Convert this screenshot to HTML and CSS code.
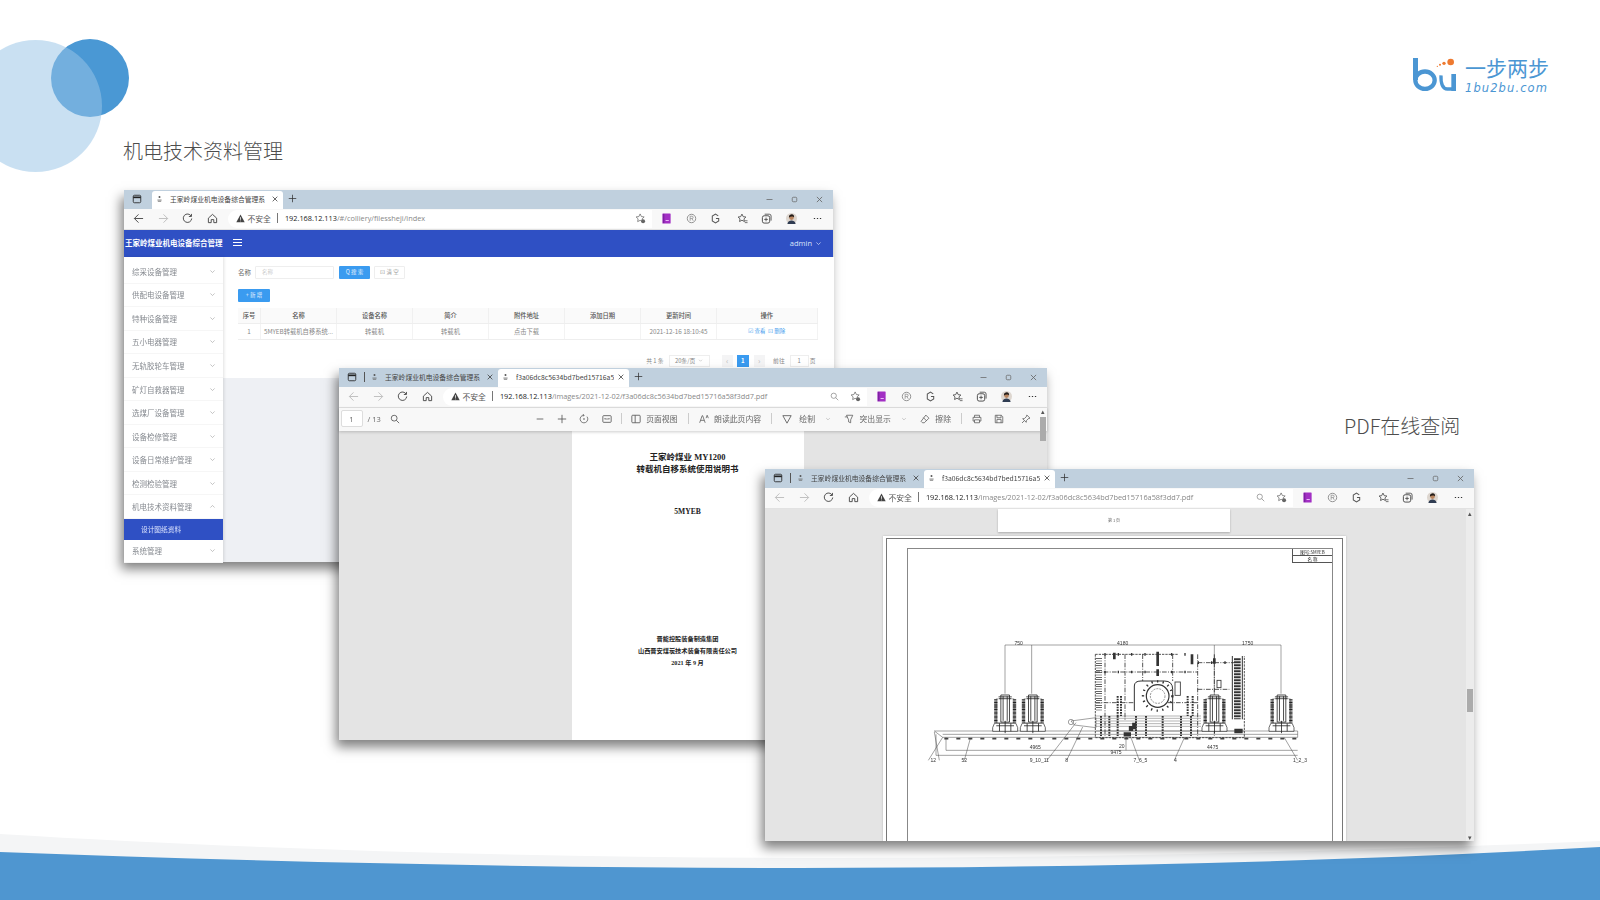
FILE: index.html
```html
<!DOCTYPE html>
<html lang="zh-CN">
<head>
    <meta charset="UTF-8">
    <meta name="viewport" content="width=device-width, initial-scale=1.0">
    <title>机电技术资料管理</title>
    <link rel="stylesheet" href="styles.css">
</head>
<body>
<svg class="sprites" width="0" height="0">
    <symbol id="i-panes" viewBox="0 0 12 12"><rect x="1.5" y="1.5" width="9" height="9" rx="1.5" fill="none" stroke="currentColor"/><path d="M1.5 4h9" stroke="currentColor" stroke-width="2"/></symbol>
    <symbol id="i-fav" viewBox="0 0 10 10"><circle cx="5" cy="2.8" r="1.4" fill="#555"/><path d="M2 7.2h6M2.6 9h4.8" stroke="#666" stroke-width="1.1"/></symbol>
    <symbol id="i-back" viewBox="0 0 12 12"><path d="M11 6H1.5M6 1.5 1.5 6 6 10.5" fill="none" stroke="currentColor"/></symbol>
    <symbol id="i-forward" viewBox="0 0 12 12"><path d="M1 6h9.5M6 1.5 10.5 6 6 10.5" fill="none" stroke="currentColor"/></symbol>
    <symbol id="i-refresh" viewBox="0 0 12 12"><path d="M10 3.4A4.6 4.6 0 1 0 10.6 6M10.3 1v2.8H7.5" fill="none" stroke="currentColor"/></symbol>
    <symbol id="i-home" viewBox="0 0 12 12"><path d="M1.5 5.6 6 1.5l4.5 4.1v4.9H7.4V7.2H4.6v3.3H1.5z" fill="none" stroke="currentColor"/></symbol>
    <symbol id="i-warn" viewBox="0 0 12 12"><path d="M6 .8 11.6 11H.4z" fill="#444"/><path d="M6 4.2v3.6M6 8.8v1" stroke="#fff"/></symbol>
    <symbol id="i-star-gear" viewBox="0 0 12 12"><path d="M5.6 1 7 3.9l3 .4-2.2 2.1.5 3-2.7-1.4L2.9 9.4l.5-3L1.2 4.3l3-.4z" fill="none" stroke="#666" stroke-width=".8"/><circle cx="8.8" cy="9" r="2.2" fill="#666"/></symbol>
    <symbol id="i-book" viewBox="0 0 12 12"><rect x="1.5" y=".5" width="9" height="11" rx=".6" fill="#a22fc4"/><path d="M3 1v10" stroke="#6b1d91"/><path d="M5 8.2h3.5" stroke="#f1c8ff"/></symbol>
    <symbol id="i-badge" viewBox="0 0 12 12"><circle cx="6" cy="6" r="4.6" fill="none" stroke="#8a8a8a"/><path d="M4.5 8.5v-5h2a1.3 1.3 0 0 1 0 2.6h-2M6.5 6l1.4 2.5" fill="none" stroke="#8a8a8a" stroke-width=".8"/></symbol>
    <symbol id="i-hex" viewBox="0 0 12 12"><path d="M9 3.2 6 1.3 2.5 3.4v5.2L6 10.7l3.5-2.1V6H6.5" fill="none" stroke="#555" stroke-width="1.1"/></symbol>
    <symbol id="i-star-list" viewBox="0 0 12 12"><path d="M5.4 1.2 6.8 4l2.9.4-2.1 2 .5 2.9-2.7-1.4-2.6 1.4.5-2.9-2.1-2L4 4z" fill="none" stroke="#444" stroke-width=".9"/><path d="M8.5 8.5h3M8.5 10.5h3" stroke="#444" stroke-width=".8"/></symbol>
    <symbol id="i-collect" viewBox="0 0 12 12"><rect x="1.5" y="3" width="8" height="8" rx="2" fill="none" stroke="#444"/><path d="M4 1.3h5a2 2 0 0 1 2 2v5M5.5 5v4M3.5 7h4" fill="none" stroke="#444" stroke-width=".9"/></symbol>
    <symbol id="i-avatar" viewBox="0 0 12 12"><circle cx="6" cy="6" r="6" fill="#ddd6cf"/><path d="M1.5 12c.5-3 2.5-3.8 4.5-3.8s4 .8 4.500 3.800z" fill="#2f3c52"/><circle cx="6" cy="5" r="2.6" fill="#b9855f"/><path d="M3.2 4.8C3 2 5 1.3 6.3 1.3c2 0 2.8 1.500 2.500 3.400C8 3.500 5 3.500 3.200 4.800z" fill="#231c19"/></symbol>
    <symbol id="i-dots" viewBox="0 0 12 12"><path d="M2 6h1.400M5.300 6h1.400M8.600 6H10" stroke="#333" stroke-width="1.200"/></symbol>
    <symbol id="i-close" viewBox="0 0 12 12"><path d="m2.500 2.500 7 7m0-7-7 7" stroke="currentColor" stroke-width="1.100"/></symbol>
    <symbol id="i-plus" viewBox="0 0 12 12"><path d="M6 1v10M1 6h10" stroke="currentColor"/></symbol>
    <symbol id="i-min" viewBox="0 0 12 12"><path d="M2 6h8" stroke="currentColor"/></symbol>
    <symbol id="i-max" viewBox="0 0 12 12"><rect x="3" y="3" width="6" height="6" rx="1.500" fill="none" stroke="currentColor"/></symbol>
    <symbol id="i-search" viewBox="0 0 12 12"><circle cx="5" cy="5" r="3.500" fill="none" stroke="currentColor"/><path d="m7.500 7.500 3.500 3.500" stroke="currentColor"/></symbol>
    <symbol id="i-rotate" viewBox="0 0 12 12"><path d="M9.600 3.200A4.600 4.600 0 1 1 6 1.400M4.500 .3 6.200 1.500 4.800 3" fill="none" stroke="currentColor" stroke-width=".9"/><circle cx="6" cy="6" r="1" fill="currentColor"/></symbol>
    <symbol id="i-fit" viewBox="0 0 12 12"><rect x="1" y="2" width="10" height="8" rx="1" fill="none" stroke="currentColor"/><path d="M3 6h6M3 6l1.200-1.200M9 6 7.800 4.800" stroke="currentColor" stroke-width=".8" fill="none"/></symbol>
    <symbol id="i-pageview" viewBox="0 0 12 12"><rect x="1" y="1.500" width="10" height="9" rx="1" fill="none" stroke="currentColor"/><path d="M5 1.500v9" stroke="currentColor"/></symbol>
    <symbol id="i-read" viewBox="0 0 12 12"><path d="m.8 10.500 3-8.500h.6l3 8.500M2 7.600h4.200M8.500 5l1.300-3.500L11.200 5" fill="none" stroke="currentColor" stroke-width=".9"/></symbol>
    <symbol id="i-draw" viewBox="0 0 12 12"><path d="M1 2h10L6 11z" fill="none" stroke="currentColor"/></symbol>
    <symbol id="i-mark" viewBox="0 0 12 12"><path d="M3 1.500h7.500L8 7v3.500l-2.500-1V7zM1 3.500h3" fill="none" stroke="currentColor" stroke-width=".9"/></symbol>
    <symbol id="i-erase" viewBox="0 0 12 12"><path d="m7 1.300 3.700 3.700-5.500 5.500H3L1.300 8.800zM4 4.300 8 8.300" fill="none" stroke="currentColor" stroke-width=".9"/></symbol>
    <symbol id="i-print" viewBox="0 0 12 12"><path d="M3 4V1.500h6V4M3 8.500H1.300V4h9.400v4.500H9M3 7h6v3.500H3z" fill="none" stroke="currentColor" stroke-width=".9"/></symbol>
    <symbol id="i-save" viewBox="0 0 12 12"><path d="M1.500 1.500h7.300l1.700 1.700v7.300h-9zM3.500 1.500v3h5v-3M3.500 10.500v-4h5v4" fill="none" stroke="currentColor" stroke-width=".9"/></symbol>
    <symbol id="i-pin" viewBox="0 0 12 12"><path d="M7 1.200 10.800 5 8.600 5.700 6.500 8l-.2 2L2 5.700l2-.2 2.300-2.100zM3.800 8.200 1.200 10.800" fill="none" stroke="currentColor" stroke-width=".9"/></symbol>
    <symbol id="i-chev" viewBox="0 0 10 10"><path d="m2 3.500 3 3 3-3" fill="none" stroke="currentColor"/></symbol>
    <symbol id="i-jack" viewBox="0 0 110 130" preserveAspectRatio="none" overflow="visible">
        <path d="M16 12h78v78H16z" fill="none" stroke="#555" stroke-width="1.500"/>
        <path d="M14 14v76M96 14v76" stroke="#222" stroke-width="15" stroke-dasharray="3 1.500"/>
        <path d="M36 0h38v88H36z" fill="#fff" stroke="#222" stroke-width="3"/>
        <path d="M26 6h58M28 12h54M46 4v80M64 4v80" stroke="#222" stroke-width="3"/>
        <path d="M8 92h94l8 14v12H0v-12z" fill="#fff" stroke="#222" stroke-width="2.500"/>
        <path d="M16 100h78M30 92v26M55 84v40M80 92v26" stroke="#222" stroke-width="3"/>
    </symbol>
</svg>

<div class="slide">
    <div class="circle circle-small"></div>
    <div class="circle circle-big"></div>

    <svg class="wave" viewBox="0 0 1600 70" preserveAspectRatio="none">
        <path d="M0 4C260 20 560 28 830 28 1100 28 1380 20 1600 11V40H0z" fill="#f4f5f6"/>
        <path d="M0 22C260 32 540 38 800 38 1060 38 1340 32 1600 17V70H0z" fill="#4f96d0"/>
    </svg>

    <h1 class="slide-title">机电技术资料管理</h1>
    <h2 class="side-title">PDF在线查阅</h2>

    <div class="logo">
        <svg class="logo-mark" viewBox="0 0 168 132">
            <rect x="15" y="18" width="15" height="66" fill="#4b96d3"/>
            <ellipse cx="51" cy="84.500" rx="29" ry="26" fill="none" stroke="#4b96d3" stroke-width="13"/>
            <path d="M99 70C98 95 104 111 118 111H134" fill="none" stroke="#4b96d3" stroke-width="10"/>
            <path d="M137 66V117" stroke="#4b96d3" stroke-width="14"/>
            <circle cx="128" cy="30" r="10" fill="#ee7a30"/>
            <circle cx="108" cy="34" r="5" fill="#ee7a30"/>
            <circle cx="96" cy="38" r="3" fill="#ee7a30"/>
            <circle cx="88" cy="43" r="2" fill="#ee7a30"/>
        </svg>
        <div class="logo-text">
            <div class="logo-cn">一步两步</div>
            <div class="logo-en">1bu2bu.com</div>
        </div>
    </div>

    <!-- admin page -->
    <div class="win win-admin">
        <div class="tabs">
            <span class="tab-panes"><svg class="ic"><use href="#i-panes"/></svg></span>
            <div class="tab tab-on"><svg class="fav"><use href="#i-fav"/></svg><span class="tab-name">王家岭煤业机电设备综合管理系</span><svg class="tab-x"><use href="#i-close"/></svg></div>
            <svg class="tab-plus"><use href="#i-plus"/></svg>
            <div class="win-btns"><svg class="ic"><use href="#i-min"/></svg><svg class="ic"><use href="#i-max"/></svg><svg class="ic"><use href="#i-close"/></svg></div>
        </div>
        <div class="toolbar">
            <span class="tb"><svg class="ic"><use href="#i-back"/></svg></span>
            <span class="tb dim"><svg class="ic"><use href="#i-forward"/></svg></span>
            <span class="tb"><svg class="ic"><use href="#i-refresh"/></svg></span>
            <span class="tb"><svg class="ic"><use href="#i-home"/></svg></span>
            <div class="address">
                <svg class="warn"><use href="#i-warn"/></svg><span class="unsafe">不安全</span><span class="addr-sep"></span>
                <span class="url"><b>192.168.12.113</b>/#/colliery/filessheji/index</span>
                <svg class="ic addr-end"><use href="#i-star-gear"/></svg>
            </div>
            <div class="tb-right">
                <span class="tb"><svg class="ic"><use href="#i-book"/></svg></span>
                <span class="tb"><svg class="ic"><use href="#i-badge"/></svg></span>
                <span class="tb"><svg class="ic"><use href="#i-hex"/></svg></span>
                <span class="tb"><svg class="ic"><use href="#i-star-list"/></svg></span>
                <span class="tb"><svg class="ic"><use href="#i-collect"/></svg></span>
                <span class="tb"><svg class="ic"><use href="#i-avatar"/></svg></span>
                <span class="tb"><svg class="ic"><use href="#i-dots"/></svg></span>
            </div>
        </div>
        <div class="app-head">
            <div class="app-name">王家岭煤业机电设备综合管理</div>
            <div class="burger"><i></i><i></i><i></i></div>
            <div class="app-user">admin <svg class="chev"><use href="#i-chev"/></svg></div>
        </div>
        <div class="app-body">
            <div class="menu">
                <div class="menu-row">综采设备管理<svg class="chev"><use href="#i-chev"/></svg></div>
                <div class="menu-row">供配电设备管理<svg class="chev"><use href="#i-chev"/></svg></div>
                <div class="menu-row">特种设备管理<svg class="chev"><use href="#i-chev"/></svg></div>
                <div class="menu-row">五小电器管理<svg class="chev"><use href="#i-chev"/></svg></div>
                <div class="menu-row">无轨胶轮车管理<svg class="chev"><use href="#i-chev"/></svg></div>
                <div class="menu-row">矿灯自救器管理<svg class="chev"><use href="#i-chev"/></svg></div>
                <div class="menu-row">选煤厂设备管理<svg class="chev"><use href="#i-chev"/></svg></div>
                <div class="menu-row">设备检修管理<svg class="chev"><use href="#i-chev"/></svg></div>
                <div class="menu-row">设备日常维护管理<svg class="chev"><use href="#i-chev"/></svg></div>
                <div class="menu-row">检测检验管理<svg class="chev"><use href="#i-chev"/></svg></div>
                <div class="menu-row">机电技术资料管理<svg class="chev chev-up"><use href="#i-chev"/></svg></div>
                <div class="menu-sub">设计图纸资料</div>
                <div class="menu-row">系统管理<svg class="chev"><use href="#i-chev"/></svg></div>
            </div>
            <div class="content">
                <div class="card">
                    <div class="filter">
                        <span class="filter-label">名称</span>
                        <span class="filter-input">名称</span>
                        <span class="btn btn-blue btn-search">Q 搜 索</span>
                        <span class="btn btn-plain">⊡ 清 空</span>
                    </div>
                    <span class="btn btn-blue btn-add">+ 新 增</span>
                    <table class="grid">
                        <colgroup><col class="c-no"><col class="c-n"><col class="c-n"><col class="c-n"><col class="c-n"><col class="c-n"><col class="c-n"><col class="c-op"></colgroup>
                        <tr><th>序号</th><th>名称</th><th>设备名称</th><th>简介</th><th>附件地址</th><th>添加日期</th><th>更新时间</th><th>操作</th></tr>
                        <tr><td>1</td><td>5MYEB转载机自移系统...</td><td>转载机</td><td>转载机</td><td>点击下载</td><td></td><td>2021-12-16 18:10:45</td><td class="ops">☑ 查看 &nbsp;⊡ 删除</td></tr>
                    </table>
                    <div class="pager">
                        <span>共 1 条</span>
                        <span class="pg-size">20条/页 <svg class="chev"><use href="#i-chev"/></svg></span>
                        <span class="pg-arrow pg-prev">‹</span>
                        <span class="pg-num">1</span>
                        <span class="pg-arrow pg-next">›</span>
                        <span class="pg-go">前往</span>
                        <span class="pg-input">1</span>
                        <span>页</span>
                    </div>
                </div>
            </div>
        </div>
    </div>

    <!-- pdf cover -->
    <div class="win win-cover">
        <div class="tabs">
            <span class="tab-panes tab-panes-line"><svg class="ic"><use href="#i-panes"/></svg></span>
            <div class="tab"><svg class="fav"><use href="#i-fav"/></svg><span class="tab-name">王家岭煤业机电设备综合管理系</span><svg class="tab-x"><use href="#i-close"/></svg></div>
            <div class="tab tab-on"><svg class="fav"><use href="#i-fav"/></svg><span class="tab-name">f3a06dc8c5634bd7bed15716a5</span><svg class="tab-x"><use href="#i-close"/></svg></div>
            <svg class="tab-plus"><use href="#i-plus"/></svg>
            <div class="win-btns"><svg class="ic"><use href="#i-min"/></svg><svg class="ic"><use href="#i-max"/></svg><svg class="ic"><use href="#i-close"/></svg></div>
        </div>
        <div class="toolbar">
            <span class="tb dim"><svg class="ic"><use href="#i-back"/></svg></span>
            <span class="tb dim"><svg class="ic"><use href="#i-forward"/></svg></span>
            <span class="tb"><svg class="ic"><use href="#i-refresh"/></svg></span>
            <span class="tb"><svg class="ic"><use href="#i-home"/></svg></span>
            <div class="address">
                <svg class="warn"><use href="#i-warn"/></svg><span class="unsafe">不安全</span><span class="addr-sep"></span>
                <span class="url"><b>192.168.12.113</b>/images/2021-12-02/f3a06dc8c5634bd7bed15716a58f3dd7.pdf</span>
                <svg class="ic addr-zoom"><use href="#i-search"/></svg>
                <svg class="ic addr-end"><use href="#i-star-gear"/></svg>
            </div>
            <div class="tb-right">
                <span class="tb"><svg class="ic"><use href="#i-book"/></svg></span>
                <span class="tb"><svg class="ic"><use href="#i-badge"/></svg></span>
                <span class="tb"><svg class="ic"><use href="#i-hex"/></svg></span>
                <span class="tb"><svg class="ic"><use href="#i-star-list"/></svg></span>
                <span class="tb"><svg class="ic"><use href="#i-collect"/></svg></span>
                <span class="tb"><svg class="ic"><use href="#i-avatar"/></svg></span>
                <span class="tb"><svg class="ic"><use href="#i-dots"/></svg></span>
            </div>
        </div>
        <div class="pdfbar">
            <span class="pdf-page">1</span>
            <span class="pdf-total">/ 13</span>
            <svg class="ic pdf-find"><use href="#i-search"/></svg>
            <svg class="ic pdf-minus"><use href="#i-min"/></svg>
            <svg class="ic pdf-tool"><use href="#i-plus"/></svg>
            <svg class="ic pdf-tool"><use href="#i-rotate"/></svg>
            <svg class="ic pdf-tool"><use href="#i-fit"/></svg>
            <span class="pdf-sep pdf-sep-first"></span>
            <svg class="ic"><use href="#i-pageview"/></svg><span class="pdf-lab">页面视图</span>
            <span class="pdf-sep"></span>
            <svg class="ic"><use href="#i-read"/></svg><span class="pdf-lab">朗读此页内容</span>
            <span class="pdf-sep"></span>
            <svg class="ic"><use href="#i-draw"/></svg><span class="pdf-lab pdf-lab-wide">绘制</span><svg class="chev"><use href="#i-chev"/></svg>
            <svg class="ic pdf-gap"><use href="#i-mark"/></svg><span class="pdf-lab">突出显示</span><svg class="chev"><use href="#i-chev"/></svg>
            <svg class="ic pdf-gap"><use href="#i-erase"/></svg><span class="pdf-lab">擦除</span>
            <span class="pdf-sep"></span>
            <svg class="ic"><use href="#i-print"/></svg>
            <svg class="ic pdf-tool"><use href="#i-save"/></svg>
            <svg class="ic pdf-pin"><use href="#i-pin"/></svg>
        </div>
        <div class="pdf-view pdf-view-cover">
            <div class="cover">
                <p class="cover-title">王家岭煤业 MY1200</p>
                <p class="cover-title">转载机自移系统使用说明书</p>
                <p class="cover-model">5MYEB</p>
                <p class="cover-org">晋能控股装备制造集团</p>
                <p class="cover-org">山西晋安煤炭技术装备有限责任公司</p>
                <p class="cover-org">2021 年 9 月</p>
            </div>
        </div>
        <div class="scroll scroll-over"><span class="scroll-top">▴</span><span class="thumb thumb-cover"></span></div>
    </div>

    <!-- pdf drawing -->
    <div class="win win-drawing">
        <div class="tabs">
            <span class="tab-panes tab-panes-line"><svg class="ic"><use href="#i-panes"/></svg></span>
            <div class="tab"><svg class="fav"><use href="#i-fav"/></svg><span class="tab-name">王家岭煤业机电设备综合管理系</span><svg class="tab-x"><use href="#i-close"/></svg></div>
            <div class="tab tab-on"><svg class="fav"><use href="#i-fav"/></svg><span class="tab-name">f3a06dc8c5634bd7bed15716a5</span><svg class="tab-x"><use href="#i-close"/></svg></div>
            <svg class="tab-plus"><use href="#i-plus"/></svg>
            <div class="win-btns"><svg class="ic"><use href="#i-min"/></svg><svg class="ic"><use href="#i-max"/></svg><svg class="ic"><use href="#i-close"/></svg></div>
        </div>
        <div class="toolbar">
            <span class="tb dim"><svg class="ic"><use href="#i-back"/></svg></span>
            <span class="tb dim"><svg class="ic"><use href="#i-forward"/></svg></span>
            <span class="tb"><svg class="ic"><use href="#i-refresh"/></svg></span>
            <span class="tb"><svg class="ic"><use href="#i-home"/></svg></span>
            <div class="address">
                <svg class="warn"><use href="#i-warn"/></svg><span class="unsafe">不安全</span><span class="addr-sep"></span>
                <span class="url"><b>192.168.12.113</b>/images/2021-12-02/f3a06dc8c5634bd7bed15716a58f3dd7.pdf</span>
                <svg class="ic addr-zoom"><use href="#i-search"/></svg>
                <svg class="ic addr-end"><use href="#i-star-gear"/></svg>
            </div>
            <div class="tb-right">
                <span class="tb"><svg class="ic"><use href="#i-book"/></svg></span>
                <span class="tb"><svg class="ic"><use href="#i-badge"/></svg></span>
                <span class="tb"><svg class="ic"><use href="#i-hex"/></svg></span>
                <span class="tb"><svg class="ic"><use href="#i-star-list"/></svg></span>
                <span class="tb"><svg class="ic"><use href="#i-collect"/></svg></span>
                <span class="tb"><svg class="ic"><use href="#i-avatar"/></svg></span>
                <span class="tb"><svg class="ic"><use href="#i-dots"/></svg></span>
            </div>
        </div>
        <div class="pdf-view pdf-view-drawing">
            <div class="pages">
                <div class="page-end">第 1 页</div>
                <div class="sheet">
                    <div class="sheet-frame">
                        <div class="sheet-inner">
                            <div class="title-block"><span>图号:5MYEB</span><span>名 称</span></div>
                            <svg class="plan" viewBox="0 0 1320 480">
                                <g fill="none" stroke="#444" stroke-width="1.500">
                                    <path d="M312 218V72H1140V218M392 72V218M940 72V218"/>
                                    <path d="M100 330 125 349H1190V330H100M125 340H1190"/>
                                    <path d="M135 349V388H1190M105 340V403H1190M675 352V388"/>
                                    <path d="M100 333 115 418M125 349 82 418M208 352 190 418M525 305 438 418M545 318 497 418M690 350 715 418M850 350 820 418M1150 350 1190 418"/>
                                    <path d="M510 300 585 290V320L520 312z"/>
                                    <circle cx="510" cy="303" r="8"/>
                                    <path d="M130 353H1190" stroke-width="5" stroke-dasharray="12 24"/>
                                    <path d="M585 285H900M585 292H900M585 300H900M585 308H900M585 316H900M585 330H1030" stroke-width="1.200"/>
                                </g>
                                <g fill="none" stroke="#333" stroke-width="2.500">
                                    <path d="M583 100V350H1030V105M583 100H830" stroke-dasharray="7 3"/>
                                    <path d="M612 100V345M672 100V300M725 100V180M815 100V180M890 100V345M940 100V345" stroke-dasharray="14 4 3 4"/>
                                    <path d="M583 153H890M583 245H700M800 245H890M890 125H1000M890 205H985" stroke-dasharray="14 4 3 4"/>
                                    <path d="M700 270V195Q700 180 720 180H790Q815 180 815 205V270" stroke-width="3"/>
                                    <circle cx="770" cy="225" r="34" stroke-width="3.500"/>
                                    <circle cx="770" cy="225" r="22" stroke-width="1.500" stroke-dasharray="6 3"/>
                                    <circle cx="770" cy="225" r="44" stroke-width="7" stroke-dasharray="4 13"/>
                                    <rect x="822" y="183" width="16" height="40"/>
                                    <rect x="948" y="178" width="12" height="22"/>
                                    <path d="M610 100H890M610 153H890M890 125H985" stroke-width="8" stroke-dasharray="4 36"/>
                                    <path d="M640 95V115M770 92V135M873 100V130M940 112V128M770 145V165" stroke-width="8"/>
                                    <path d="M650 225V285M660 225V285M860 225V285M875 225V285" stroke-width="6" stroke-dasharray="5 3"/>
                                    <path d="M994 105V295M1024 105V295" stroke-width="3"/>
                                    <path d="M1009 112V295" stroke-width="20" stroke-dasharray="6 3"/>
                                    <path d="M594 112V270" stroke-width="18" stroke-dasharray="2 5"/>
                                    <path d="M600 285V345M625 285V345M650 285V345M705 285V345M735 285V345M785 285V345M840 285V345M870 285V345" stroke-width="6" stroke-dasharray="5 3"/>
                                    <path d="M668 340H690M690 315V330M700 305V325M1000 330H1025" stroke-width="13"/>
                                </g>
                                <use href="#i-jack" x="275" y="222" width="75" height="120"/>
                                <use href="#i-jack" x="358" y="222" width="75" height="120"/>
                                <use href="#i-jack" x="903" y="222" width="75" height="120"/>
                                <use href="#i-jack" x="1104" y="222" width="75" height="120"/>
                                <g class="plan-text">
                                    <text x="353" y="71">750</text><text x="665" y="71">4180</text><text x="1040" y="71">1750</text>
                                    <text x="403" y="383">4965</text><text x="935" y="383">4475</text><text x="662" y="382">20</text><text x="645" y="400">9475</text>
                                    <text x="97" y="422">12</text><text x="190" y="422">52</text><text x="415" y="422">9_10_11</text><text x="497" y="422">8</text><text x="718" y="422">7_6_5</text><text x="823" y="422">4</text><text x="1197" y="422">1_2_3</text>
                                </g>
                            </svg>
                        </div>
                    </div>
                </div>
            </div>
            <div class="scroll"><span class="scroll-top">▴</span><span class="thumb thumb-drawing"></span><span class="scroll-end">▾</span></div>
        </div>
    </div>
</div>
</body>
</html>
```

FILE: styles.css
```css
* { box-sizing: border-box; }

body {
    margin: 0;
    background: #fff;
    font-family: "Noto Sans CJK SC", "Noto Sans", sans-serif;
    overflow: hidden;
}

.sprites { position: absolute; }

.slide {
    position: relative;
    width: 1600px;
    height: 900px;
    overflow: hidden;
    background: #fff;
}

/* slide decoration */
.circle { position: absolute; border-radius: 50%; }
.circle-big {
    left: -31px;
    top: 40px;
    width: 133px;
    height: 132px;
    background: rgba(153, 196, 230, 0.53);
}
.circle-small {
    left: 51px;
    top: 39px;
    width: 78px;
    height: 78px;
    background: #4a98d4;
}
.wave {
    position: absolute;
    left: 0;
    bottom: 0;
    width: 1600px;
    height: 70px;
}
.slide-title, .side-title {
    position: absolute;
    margin: 0;
    font-size: 20px;
    font-weight: 300;
    line-height: 28px;
    color: #4d4d4d;
}
.slide-title { left: 123px; top: 137px; }
.side-title { left: 1344px; top: 412px; }

.logo {
    position: absolute;
    left: 1408px;
    top: 52px;
    display: flex;
    gap: 1px;
}
.logo-mark { width: 56px; height: 44px; }
.logo-text { color: #4b96d3; }
.logo-cn { font-size: 21px; line-height: 22px; margin-top: 4px; }
.logo-en {
    font-family: "DejaVu Sans", sans-serif;
    font-size: 11.5px;
    font-style: italic;
    line-height: 13px;
    letter-spacing: 1.1px;
    margin-top: 4px;
}

/* browser window */
.win {
    position: absolute;
    width: 709px;
    height: 372px;
    display: flex;
    flex-direction: column;
    background: #fff;
    box-shadow: -3px 7px 11px rgba(0, 0, 0, 0.5);
    color: #444;
    filter: blur(0.3px);
}
.win-admin { left: 124px; top: 190px; }
.win-cover { left: 339px; top: 368px; width: 708px; }
.win-drawing { left: 765px; top: 469px; }

.ic { width: 10px; height: 10px; flex: none; color: #444; }

.tabs {
    display: flex;
    align-items: flex-end;
    height: 18.5px;
    flex: none;
    background: #c0d0de;
}
.tab-panes {
    width: 28px;
    height: 18.5px;
    display: flex;
    align-items: center;
    padding-left: 8px;
}
.tab-panes .ic { color: #222; }
.tab-panes-line { background: linear-gradient(#555, #555) 24.5px 4px / 1px 10px no-repeat; }
.tab {
    width: 131px;
    height: 18px;
    display: flex;
    align-items: center;
    padding: 0 4px 2px 4px;
    font-size: 6.8px;
    color: #444;
}
.tab-on { background: #fff; border-radius: 3px 3px 0 0; }
.fav { width: 7px; height: 7px; flex: none; margin-right: 7px; }
.tab-name {
    flex: 1;
    overflow: hidden;
    white-space: nowrap;
}
.tab-x { width: 8px; height: 8px; margin-left: 3px; color: #333; flex: none; }
.tab-plus { width: 9px; height: 9px; margin: 0 0 6px 5px; color: #333; }
.win-btns { margin-left: auto; display: flex; height: 18.5px; align-items: center; padding-right: 1px; }
.win-btns .ic { width: 9px; height: 9px; margin: 0 8px; color: #666; }

.toolbar {
    display: flex;
    align-items: center;
    height: 21px;
    flex: none;
    padding-left: 2.5px;
    background: #f8f8f8;
    border-bottom: 1px solid #e2e2e2;
}
.tb {
    width: 24.5px;
    height: 20px;
    display: flex;
    align-items: center;
    justify-content: center;
    flex: none;
}
.tb .ic { width: 11px; height: 11px; }
.dim .ic { color: #bbb; }
.address {
    width: 424px;
    margin-left: 3px;
    height: 18px;
    display: flex;
    align-items: center;
    padding: 0 0 1px 8px;
    background: #fff;
    border-radius: 9px 0 0 9px;
    font-size: 7.6px;
}
.warn { width: 9px; height: 9px; margin-right: 3px; }
.unsafe { color: #555; font-size: 7.8px; }
.addr-sep { width: 1px; height: 10px; background: #777; margin: 0 7px 0 6px; }
.url { font-family: "Open Sans", sans-serif; font-size: 7.35px; color: #888; white-space: nowrap; }
.url b { font-weight: 400; color: #222; }
.addr-zoom { margin-left: auto; color: #888; width: 9px; height: 9px; }
.addr-end { margin-left: 11px; margin-right: 6px; width: 11px; height: 11px; }
.win-admin .addr-end { margin-left: auto; }
.tb-right { display: flex; margin-left: 3px; }
.tb-right .tb:nth-child(4), .tb-right .tb:last-child { margin-left: 2px; }

/* admin app */
.app-head {
    height: 27px;
    flex: none;
    display: flex;
    align-items: center;
    background: #2f50c4;
    color: #fff;
}
.app-name {
    width: 99px;
    padding: 0 0 2px 1px;
    font-size: 7.5px;
    font-weight: 700;
    white-space: nowrap;
}
.burger { margin-left: 10px; display: flex; flex-direction: column; gap: 2px; width: 9px; margin-top: -2px; }
.burger i { display: block; height: 1px; background: #fff; }
.app-user {
    margin-left: auto;
    padding-right: 11px;
    font-family: "Open Sans", sans-serif;
    font-size: 7.5px;
    color: #dde4fa;
    display: flex;
    align-items: center;
    gap: 3px;
}
.chev { width: 7px; height: 7px; flex: none; color: #aaa; }
.app-user .chev { color: #dde4fa; }
.chev-up { transform: rotate(180deg); }

.app-body { flex: 1; display: flex; min-height: 0; }
.menu {
    width: 99px;
    flex: none;
    padding-top: 3.5px;
    background: #fff;
    box-shadow: 1px 0 3px rgba(0, 0, 0, 0.12);
    position: relative;
}
.menu-row {
    height: 23.55px;
    display: flex;
    align-items: center;
    justify-content: space-between;
    padding: 0 7px 0 8px;
    font-size: 7.5px;
    color: #868a90;
    border-bottom: 1px solid #f6f6f6;
}
.menu-sub {
    height: 20.5px;
    display: flex;
    align-items: center;
    padding-left: 17px;
    font-size: 6.7px;
    color: #dfe6ff;
    background: #2f50c4;
}
.content { flex: 1; background: #eef0f4; }
.card { background: #fff; height: 121px; padding: 9px 16px 0 15px; color: #777; font-size: 6.5px; }
.filter { display: flex; align-items: center; height: 13.5px; }
.filter-label { width: 17px; color: #666; }
.filter-input {
    width: 79px;
    height: 13.5px;
    display: flex;
    align-items: center;
    padding-left: 6px;
    border: 1px solid #eee;
    border-radius: 1px;
    color: #ccc;
    font-size: 5.5px;
}
.btn {
    display: flex;
    align-items: center;
    justify-content: center;
    height: 13.5px;
    width: 31px;
    border-radius: 1px;
    font-size: 5.5px;
}
.btn-blue { background: #3a9bf0; color: #e4f1fd; }
.btn-plain { border: 1px solid #eee; margin-left: 4px; color: #999; }
.btn-search { margin-left: 5px; }
.btn-add { margin-top: 9.5px; width: 32px; }

.grid {
    width: 579px;
    margin-top: 6px;
    border-collapse: collapse;
    table-layout: fixed;
    font-size: 6.3px;
    text-align: center;
}
.c-no { width: 22.5px; }
.c-n { width: 76px; }
.c-op { width: 100.5px; }
.grid th {
    height: 15px;
    padding: 0;
    background: #fafafa;
    font-weight: 500;
    color: #555;
    border-right: 1px solid #f0f0f0;
    border-bottom: 1px solid #eee;
}
.grid td {
    height: 16px;
    padding: 0;
    color: #888;
    border-right: 1px solid #f3f3f3;
    border-bottom: 1px solid #eee;
    white-space: nowrap;
}
.grid td.ops { color: #4a9fee; font-size: 5.5px; }

.pager {
    display: flex;
    align-items: center;
    justify-content: flex-end;
    margin-top: 15px;
    padding-right: 2px;
    color: #888;
    font-size: 5.8px;
}
.pg-size {
    width: 41px;
    height: 12px;
    margin-left: 5px;
    display: flex;
    align-items: center;
    justify-content: center;
    gap: 3px;
    border: 1px solid #eee;
}
.pg-size .chev { width: 5px; height: 5px; }
.pg-arrow, .pg-num {
    width: 11.5px;
    height: 12px;
    display: flex;
    align-items: center;
    justify-content: center;
    background: #f4f4f5;
    color: #bbb;
    font-size: 8px;
}
.pg-prev { margin-left: 12px; }
.pg-next { margin-left: 5px; }
.pg-num { margin-left: 4px; background: #3a9bf0; color: #fff; font-size: 6px; font-weight: 700; }
.pg-go { margin-left: 8px; }
.pg-input {
    width: 19px;
    height: 12px;
    margin: 0 1px 0 5px;
    border: 1px solid #eee;
    text-align: center;
    line-height: 10px;
}

/* pdf viewer */
.pdfbar {
    height: 23px;
    flex: none;
    display: flex;
    align-items: center;
    padding: 0 0 1px 1.5px;
    background: #f8f8f8;
    box-shadow: 0 1px 3px rgba(0, 0, 0, 0.2);
    font-size: 7.85px;
    color: #666;
    position: relative;
}
.pdfbar .ic { color: #555; }
.pdfbar .chev { width: 6px; height: 6px; margin-left: 10px; }
.pdf-page {
    width: 22px;
    height: 17px;
    display: flex;
    align-items: center;
    justify-content: center;
    background: #fff;
    border: 1px solid #ddd;
    border-radius: 2px;
    font-family: "Open Sans", sans-serif;
    font-size: 7.5px;
}
.pdf-total { margin-left: 5px; width: 20px; font-family: "Open Sans", sans-serif; font-size: 7.5px; }
.pdf-find { margin-left: 2px; }
.pdf-minus { margin-left: 135px; }
.pdf-tool { margin-left: 12.4px; }
.pdf-sep { width: 1px; height: 11px; background: #ccc; margin: 0 10px; flex: none; }
.pdf-sep-first { margin: 0 9px; }
.pdf-lab { margin-left: 5.5px; white-space: nowrap; }
.pdf-lab-wide { margin-left: 7.2px; }
.pdf-gap { margin-left: 13px; }
.pdf-pin { margin-left: 16.5px; }

.pdf-view {
    flex: 1;
    min-height: 0;
    display: flex;
    background: #e4e4e4;
    overflow: hidden;
}
.pdf-view-cover { padding-left: 232.5px; }
.scroll {
    width: 8px;
    margin-left: auto;
    flex: none;
    display: flex;
    flex-direction: column;
    align-items: center;
    font-size: 7px;
    line-height: 8px;
    color: #555;
    background: #ececec;
}
.scroll-over {
    position: absolute;
    top: 39px;
    right: 0;
    bottom: 0;
    background: transparent;
}
.thumb { width: 6.5px; background: #ababab; }
.thumb-cover { height: 24px; margin-top: 2px; }
.thumb-drawing { height: 23px; margin-top: 172px; }
.scroll-end { margin-top: auto; }

.cover {
    width: 232px;
    background: #fff;
    text-align: center;
    font-family: "Liberation Serif", "Noto Sans CJK SC", serif;
    color: #222;
    padding-top: 20px;
}
.cover p { margin: 0; white-space: nowrap; }
.cover-title { font-size: 8.5px; font-weight: 700; line-height: 12px; }
.cover-model { margin-top: 31px !important; font-size: 7.6px; font-weight: 700; line-height: 12px; }
.cover-org { font-size: 6.2px; font-weight: 700; line-height: 12px; }
.cover-model + .cover-org { margin-top: 115px; }

.pages { flex: 1; min-width: 0; padding-left: 118px; }
.page-end {
    width: 232px;
    height: 23px;
    margin-left: 115px;
    background: #fff;
    box-shadow: 0 1px 2px rgba(0, 0, 0, 0.25);
    display: flex;
    align-items: center;
    justify-content: center;
    font-size: 4px;
    color: #666;
}
.sheet {
    width: 463px;
    height: 310px;
    margin-top: 4px;
    padding: 2px 3px 0;
    background: #fff;
    box-shadow: 0 0 2px rgba(0, 0, 0, 0.2);
}
.sheet-frame {
    height: 100%;
    padding: 9px 9px 0 20px;
    border: 1px solid #777;
    border-bottom: 0;
}
.sheet-inner {
    height: 100%;
    border: 1px solid #888;
    border-bottom: 0;
}
.title-block {
    width: 40px;
    height: 14px;
    margin-left: auto;
    display: flex;
    flex-direction: column;
    border-left: 1px solid #555;
    border-bottom: 1px solid #555;
    font-size: 4.5px;
    line-height: 6.5px;
    text-align: center;
    color: #222;
}
.title-block span:first-child { border-bottom: 1px solid #555; }
.plan { display: block; width: 440px; height: 160px; margin: 58px 0 0 -7px; }
.plan-text text {
    font-family: "Liberation Sans", sans-serif;
    font-size: 15px;
    fill: #333;
    text-anchor: middle;
}
```
